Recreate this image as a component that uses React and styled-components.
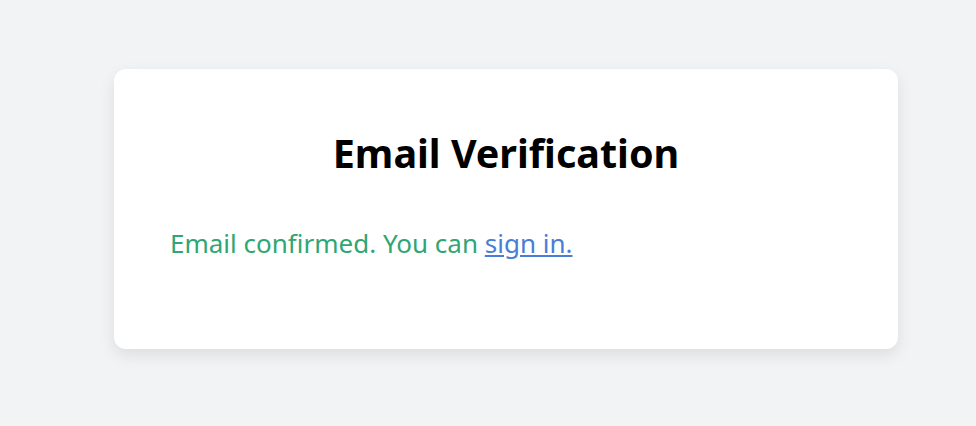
import React from 'react';
import styled, { createGlobalStyle } from 'styled-components';

const GlobalStyle = createGlobalStyle`
  html, body {
    margin: 0;
    padding: 0;
    background-color: #f2f3f5;
    font-family: "Segoe UI", "Noto Sans", "Open Sans", sans-serif;
  }
`;

const Page = styled.div`
  min-height: 426px;
  box-sizing: border-box;
  padding: 69px 78px 0 114px;
`;

const Card = styled.div`
  box-sizing: border-box;
  width: 784px;
  height: 280px;
  background-color: #ffffff;
  border-radius: 12px;
  box-shadow: 0 6px 16px rgba(0, 0, 0, 0.09);
  padding: 58px 56px 0;
`;

const Title = styled.h1`
  margin: 0 0 46px;
  text-align: center;
  font-size: 39.5px;
  line-height: 52px;
  font-weight: 700;
  color: #000000;
`;

const Message = styled.p`
  margin: 0;
  font-size: 26px;
  line-height: 36px;
  color: #2fa673;
`;

const SignInLink = styled.a`
  color: #4a7dd6;
  text-decoration: underline;
  cursor: pointer;
`;

const App = () => {
  return (
    <>
      <GlobalStyle />
      <Page>
        <Card>
          <Title>Email Verification</Title>
          <Message>
            Email confirmed. You can <SignInLink href="#">sign in.</SignInLink>
          </Message>
        </Card>
      </Page>
    </>
  );
};

export default App;
